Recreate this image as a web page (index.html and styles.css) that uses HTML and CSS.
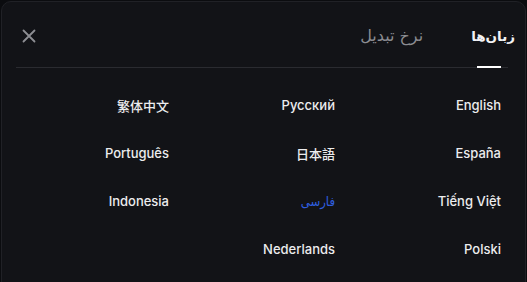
FILE: index.html
```html
<!DOCTYPE html>
<html lang="fa" dir="rtl">
<head>
<meta charset="utf-8">
<link rel="stylesheet" href="styles.css">
</head>
<body>
<div class="panel">
  <div class="header">
    <div class="tabs">
      <div class="tab active">زبان‌ها</div>
      <div class="tab">نرخ تبدیل</div>
    </div>
    <div class="close" aria-label="close">
      <svg width="14" height="14" viewBox="0 0 14 14"><path d="M1.5 1.5 L12.5 12.5 M12.5 1.5 L1.5 12.5" stroke="#8d8e93" stroke-width="1.8" stroke-linecap="round"/></svg>
    </div>
  </div>
  <div class="grid">
    <div class="lang">English</div>
    <div class="lang">Русский</div>
    <div class="lang">繁体中文</div>
    <div class="lang">España</div>
    <div class="lang">日本語</div>
    <div class="lang">Português</div>
    <div class="lang">Tiếng Việt</div>
    <div class="lang selected">فارسی</div>
    <div class="lang">Indonesia</div>
    <div class="lang">Polski</div>
    <div class="lang">Nederlands</div>
  </div>
</div>
</body>
</html>
```
FILE: styles.css
```css
html, body {
  margin: 0;
  padding: 0;
  background: #0b0c0f;
  height: 100%;
}
body {
  font-family: Inter, Roboto, "Noto Sans CJK SC", "DejaVu Sans", sans-serif;
  overflow: hidden;
}
.panel {
  margin: 1px 1px 0 1px;
  height: 290px;
  background: #121317;
  border: 1px solid #202126;
  border-radius: 10px 10px 0 0;
  padding: 0 17px 0 14px;
  box-sizing: border-box;
}
.header {
  display: flex;
  justify-content: space-between;
  align-items: center;
  height: 65px;
  border-bottom: 1px solid #2a2b30;
}
.tabs {
  display: flex;
  gap: 48px;
  align-self: stretch;
  align-items: center;
  margin-right: -7px;
}
.tab {
  position: relative;
  font-family: "DejaVu Sans", sans-serif;
  font-size: 16px;
  color: #8b8c91;
  height: 100%;
  display: flex;
  align-items: center;
  padding-top: 2px;
  box-sizing: border-box;
}
.tab.active {
  color: #f2f2f4;
  font-weight: bold;
  font-size: 13.5px;
}
.tab.active::after {
  content: "";
  position: absolute;
  bottom: -1px;
  right: 14px;
  width: 24px;
  height: 2px;
  background: #ffffff;
}
.close {
  display: flex;
  align-items: center;
  margin-left: 6px;
  padding-top: 2px;
}
.grid {
  display: grid;
  grid-template-columns: 166px 166px 1fr;
  grid-auto-rows: 48px;
  margin-top: 13px;
}
.lang {
  display: flex;
  align-items: center;
  justify-content: flex-start;
  padding-right: 7px;
  font-size: 13px;
  font-weight: 500;
  color: #ececee;
}
.lang.selected {
  color: #2f5fe0;
  font-family: "DejaVu Sans Condensed", "DejaVu Sans", sans-serif;
  font-size: 13px;
  font-weight: normal;
}
```
